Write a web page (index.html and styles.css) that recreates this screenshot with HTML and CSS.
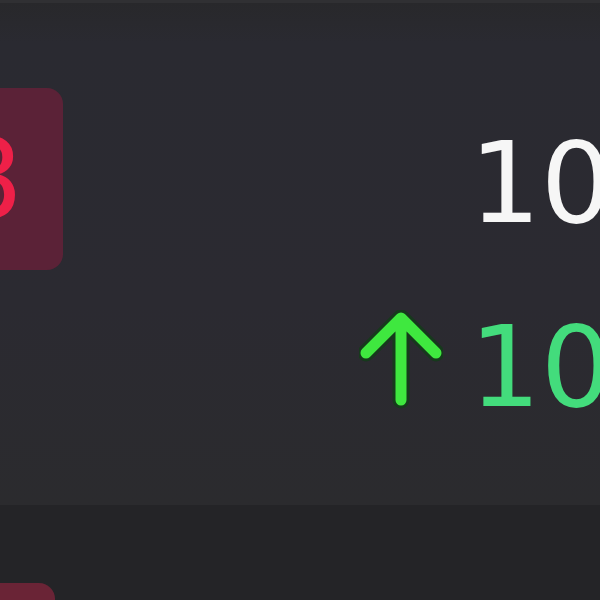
FILE: index.html
```html
<!DOCTYPE html>
<html lang="en">
<head>
    <meta charset="UTF-8">
    <meta name="viewport" content="width=device-width, initial-scale=1.0">
    <title>Stats</title>
    <link rel="stylesheet" href="styles.css">
</head>
<body>
    <!-- Строка со счётом -->
    <div class="row row-top">
        <div class="badge">8</div>
        <div class="stats">
            <div class="value">10</div>
            <div class="change">
                <svg class="arrow" width="84" height="100" viewBox="0 0 84 100">
                    <g fill="none" stroke-linecap="round" stroke-linejoin="round">
                        <path d="M42 8 V90 M7 43 L42 8 L77 43" stroke="#163a1c" stroke-width="17"/>
                        <path d="M42 8 V90 M7 43 L42 8 L77 43" stroke="#3fe83f" stroke-width="11"/>
                    </g>
                </svg>
                <span class="change-value">10</span>
            </div>
        </div>
    </div>

    <!-- Следующая строка -->
    <div class="row row-next">
        <div class="badge badge-next">8</div>
    </div>
</body>
</html>
```

FILE: styles.css
```css
body {
    margin: 0;
    background-color: #242427;
    font-family: "DejaVu Sans", sans-serif;
    overflow: hidden;
    height: 600px;
}

.row {
    display: flex;
    align-items: flex-start;
    overflow: hidden;
}

.row-top {
    height: 502px;
    background: linear-gradient(#28282b 0, #2a2a31 40px, #2b2a31 300px, #2b2b2e 100%);
    border-top: 3px solid #303033;
}

.row-next {
    height: 95px;
    background-color: #242427;
}

.badge {
    flex: none;
    box-sizing: border-box;
    width: 123px;
    height: 182px;
    margin: 85px 0 0 -60px;
    padding-right: 28px;
    border-radius: 16px;
    background-color: #5b2237;
    color: #ee2048;
    font-size: 110px;
    line-height: 182px;
    text-align: center;
}

.badge-next {
    width: 115px;
    margin-top: 78px;
    background-color: #6a2436;
    color: transparent;
}

.stats {
    margin-left: auto;
    margin-right: -12px;
    margin-top: 124px;
    display: flex;
    flex-direction: column;
    align-items: flex-end;
    gap: 71px;
}

.value,
.change-value {
    font-size: 112px;
    line-height: 1;
}

.value {
    color: #f6f6f6;
}

.change {
    display: flex;
    align-items: center;
    gap: 26px;
}

.change-value {
    color: #43dc7c;
}

.arrow {
    margin-bottom: 14px;
}
```
